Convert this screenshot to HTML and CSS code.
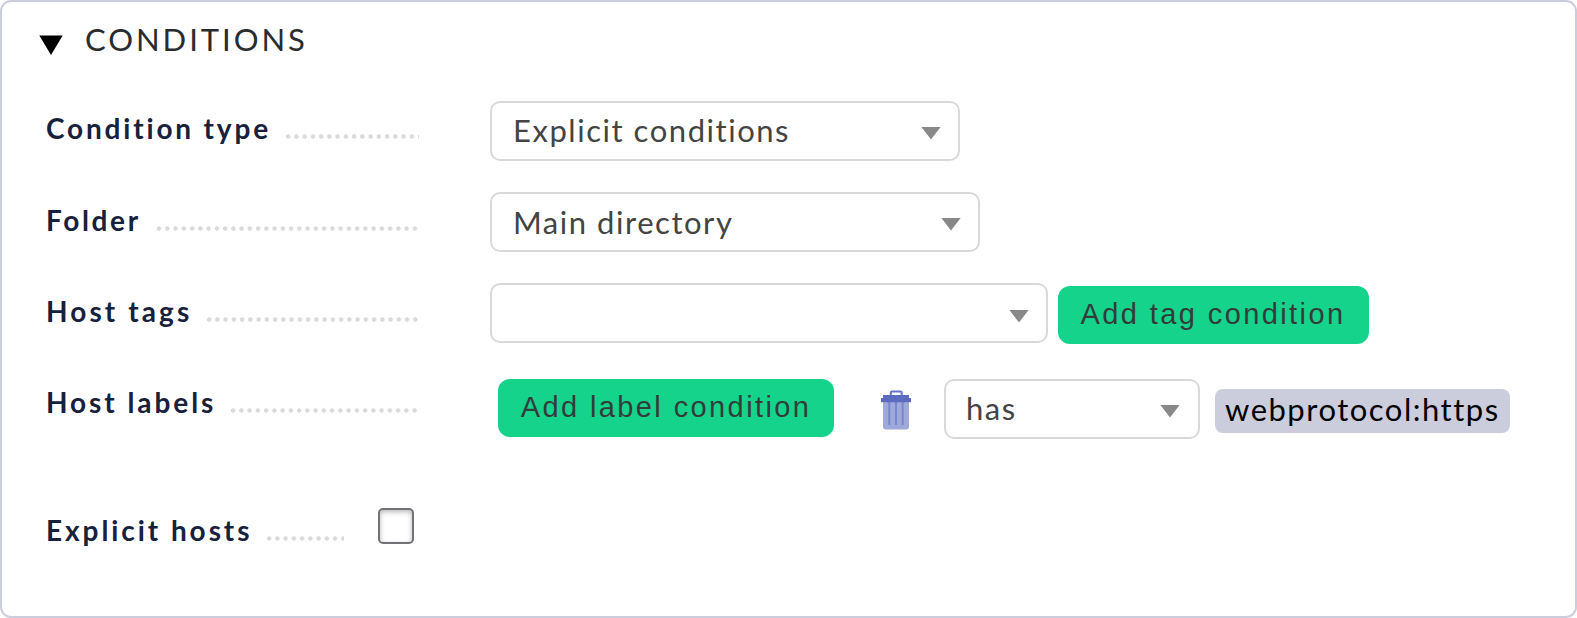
FILE: index.html
```
<!DOCTYPE html>
<html lang="en">
<head>
<meta charset="utf-8">
<title>Conditions</title>
<link rel="stylesheet" href="styles.css">
</head>
<body>
<main class="panel">
  <header class="panel-header">
    <svg class="toggle" width="24" height="20" viewBox="0 0 24 20"><path d="M0.3 0.5H23.7L12 20Z" fill="#000"/></svg>
    <h1 class="title">CONDITIONS</h1>
  </header>
  <section class="row type-row">
    <div class="label"><span class="name">Condition type</span><span class="dots"></span></div>
    <div class="value"><div class="select type"><span>Explicit conditions</span><i class="caret"></i></div></div>
  </section>
  <section class="row folder-row">
    <div class="label"><span class="name">Folder</span><span class="dots"></span></div>
    <div class="value"><div class="select folder"><span>Main directory</span><i class="caret"></i></div></div>
  </section>
  <section class="row tags-row">
    <div class="label"><span class="name">Host tags</span><span class="dots"></span></div>
    <div class="value"><div class="select tags"><span></span><i class="caret"></i></div><button class="button add-tag">Add tag condition</button></div>
  </section>
  <section class="row labels-row">
    <div class="label"><span class="name">Host labels</span><span class="dots"></span></div>
    <div class="value">
      <button class="button add-label">Add label condition</button>
      <svg class="trash" width="30" height="40" viewBox="0 0 30 40">
        <path d="M2 11H28V36.5Q28 39.5 25 39.5H5Q2 39.5 2 36.5Z" fill="#9fa8da"/>
        <path d="M8.3 12V35M15 12V35M21.7 12V35" stroke="#7986cb" stroke-width="2"/>
        <path d="M9.8 6V2.6Q9.8 1.5 11 1.5H19.5Q20.7 1.5 20.7 2.6V6" fill="none" stroke="#6472c3" stroke-width="2"/>
        <path d="M2 5H28V8H30V12.3H0V8H2Z" fill="#5c6bc0"/>
      </svg>
      <div class="select has"><span>has</span><i class="caret"></i></div>
      <span class="chip">webprotocol:https</span>
    </div>
  </section>
  <section class="row hosts-row">
    <div class="label short"><span class="name">Explicit hosts</span><span class="dots"></span></div>
    <span class="checkbox" role="checkbox" aria-checked="false"></span>
  </section>
</main>
</body>
</html>
```
FILE: styles.css
```
* { box-sizing: border-box; }
body { margin: 0; background: #fff; font-family: Lato, sans-serif; }
.panel { width: 1577px; height: 618px; border: 2px solid #cbcddd; border-radius: 11px; padding: 0 0 0 37px; background: #fff; }
.panel-header { display: flex; align-items: flex-start; height: 99px; padding-top: 18px; }
.toggle { margin: 15px 22px 0 0; }
.title { margin: 0; font-size: 31px; font-weight: 400; line-height: 38px; letter-spacing: 2.95px; color: #292c2e; }
.row { display: flex; align-items: flex-start; height: 91px; padding-left: 7px; }
.label { display: flex; width: 373px; height: 60px; padding-top: 10px; }
.name { font-size: 28px; font-weight: 700; line-height: 36px; letter-spacing: 2.93px; white-space: nowrap; color: #17213c; }
.type-row .name { letter-spacing: 2.83px; }
.folder-row .name { letter-spacing: 2.65px; }
.tags-row .name { letter-spacing: 3.1px; }
.type-row .label, .hosts-row .label { padding-top: 9px; }
.dots { flex: 1; height: 5px; margin: 24px 0 0 15px; background: radial-gradient(circle at 2.1px 2.5px, #dadada 1.9px, transparent 2.5px) 0 0 / 8.25px 5px repeat-x; }
.folder-row .dots { margin-left: 16px; }
.value { display: flex; align-items: flex-start; padding-left: 71px; }
.select { display: flex; align-items: center; justify-content: space-between; height: 60px; padding: 0 17px 2px 21px; border: 2px solid #d9d9d9; border-radius: 10px; font-size: 31px; line-height: 36px; letter-spacing: 1.54px; color: #444; background: #fff; }
.type { width: 470px; }
.folder { width: 490px; padding-bottom: 0; }
.tags { width: 558px; }
.has { width: 256px; padding-right: 18px; padding-left: 20px; }
.caret { width: 20px; height: 13px; margin-top: 6px; background: #888; clip-path: polygon(0 0, 100% 0, 50% 100%); }
.folder .caret { margin-top: 4px; }
.tags .caret { margin-top: 8px; }
.button { height: 58px; padding: 0 0 2px; border: 0; border-radius: 12px; background: #15d38a; color: #333b3b; font: 29px "Liberation Sans", Arial, sans-serif; letter-spacing: 2.4px; white-space: nowrap; }
.add-tag { width: 311px; margin: 3px 0 0 10px; padding-right: 1px; }
.add-label { width: 336px; margin-left: 8px; }
.labels-row { height: 129px; }
.labels-row .value { padding-top: 5px; }
.trash { margin: 11px 33px 0 47px; }
.chip { width: 295px; height: 44px; margin: 10px 0 0 15px; padding-left: 10px; border-radius: 8px; background: #cbcddc; color: #000; font-size: 31px; line-height: 40px; letter-spacing: 1.5px; white-space: nowrap; }
.label.short { width: 298px; }
.checkbox { width: 36px; height: 36px; margin: 5px 0 0 34px; border: 2px solid #707276; border-radius: 5px; background: #fff; box-shadow: inset 0 2px 5px #bbb6ba; }
```
